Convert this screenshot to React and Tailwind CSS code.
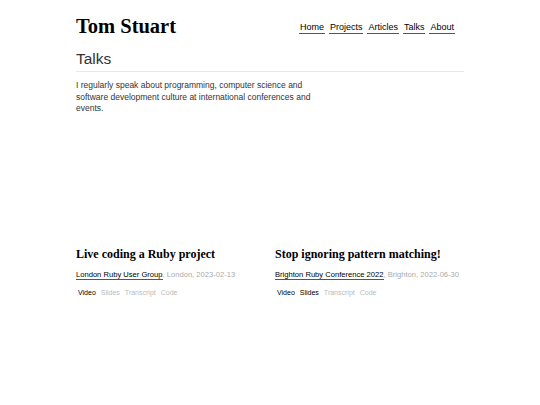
export default function App() {
  const talks = [
    {
      title: "Live coding a Ruby project",
      event: "London Ruby User Group",
      meta: ", London, 2023-02-13",
      links: [["Video", true], ["Slides", false], ["Transcript", false], ["Code", false]],
    },
    {
      title: "Stop ignoring pattern matching!",
      event: "Brighton Ruby Conference 2022",
      meta: ", Brighton, 2022-06-30",
      links: [["Video", true], ["Slides", true], ["Transcript", false], ["Code", false]],
    },
  ];
  const serif = { fontFamily: '"Liberation Serif", "Times New Roman", serif' };
  return (
    <div className="min-h-[405px] bg-white" style={{ fontFamily: '"Liberation Sans", Arial, sans-serif' }}>
      <div className="mx-auto w-[388px]">
        <header className="flex items-center justify-between pt-[14px]">
          <h1 className="text-[20.5px] font-bold leading-[24px] text-black" style={serif}>
            Tom Stuart
          </h1>
          <nav className="mr-[9px] mt-[3px] flex gap-[4px] text-[9px] leading-[12px] text-black">
            {["Home", "Projects", "Articles", "Talks", "About"].map((n) => (
              <a key={n} className="border-b border-[#555] px-[1px]">{n}</a>
            ))}
          </nav>
        </header>
        <h2 className="mt-[11px] border-b border-[#e8e8e8] pb-[2px] text-[15.5px] leading-[20px] text-[#333]">Talks</h2>
        <p className="mt-[8px] w-[240px] text-[8.5px] leading-[11.5px] text-[#333]">
          I regularly speak about programming, computer science and software development culture at international conferences and events.
        </p>
        <div className="mt-[132px] grid grid-cols-2 gap-x-[10px]">
          {talks.map((t) => (
            <div key={t.title}>
              <h3 className="text-[12px] font-bold leading-[15px] text-black" style={serif}>
                {t.title}
              </h3>
              <div className="mt-[7px] text-[7.6px] leading-[11px]">
                <a className="border-b border-[#555] text-black">{t.event}</a>
                <span className="text-[#aaa]">{t.meta}</span>
              </div>
              <div className="mt-[8px] flex gap-[5px] pl-[2px] text-[7px] leading-[10px]">
                {t.links.map(([l, on]) => (
                  <span key={l} className={on ? "text-black" : "text-[#bbb]"}>{l}</span>
                ))}
              </div>
            </div>
          ))}
        </div>
      </div>
    </div>
  );
}
